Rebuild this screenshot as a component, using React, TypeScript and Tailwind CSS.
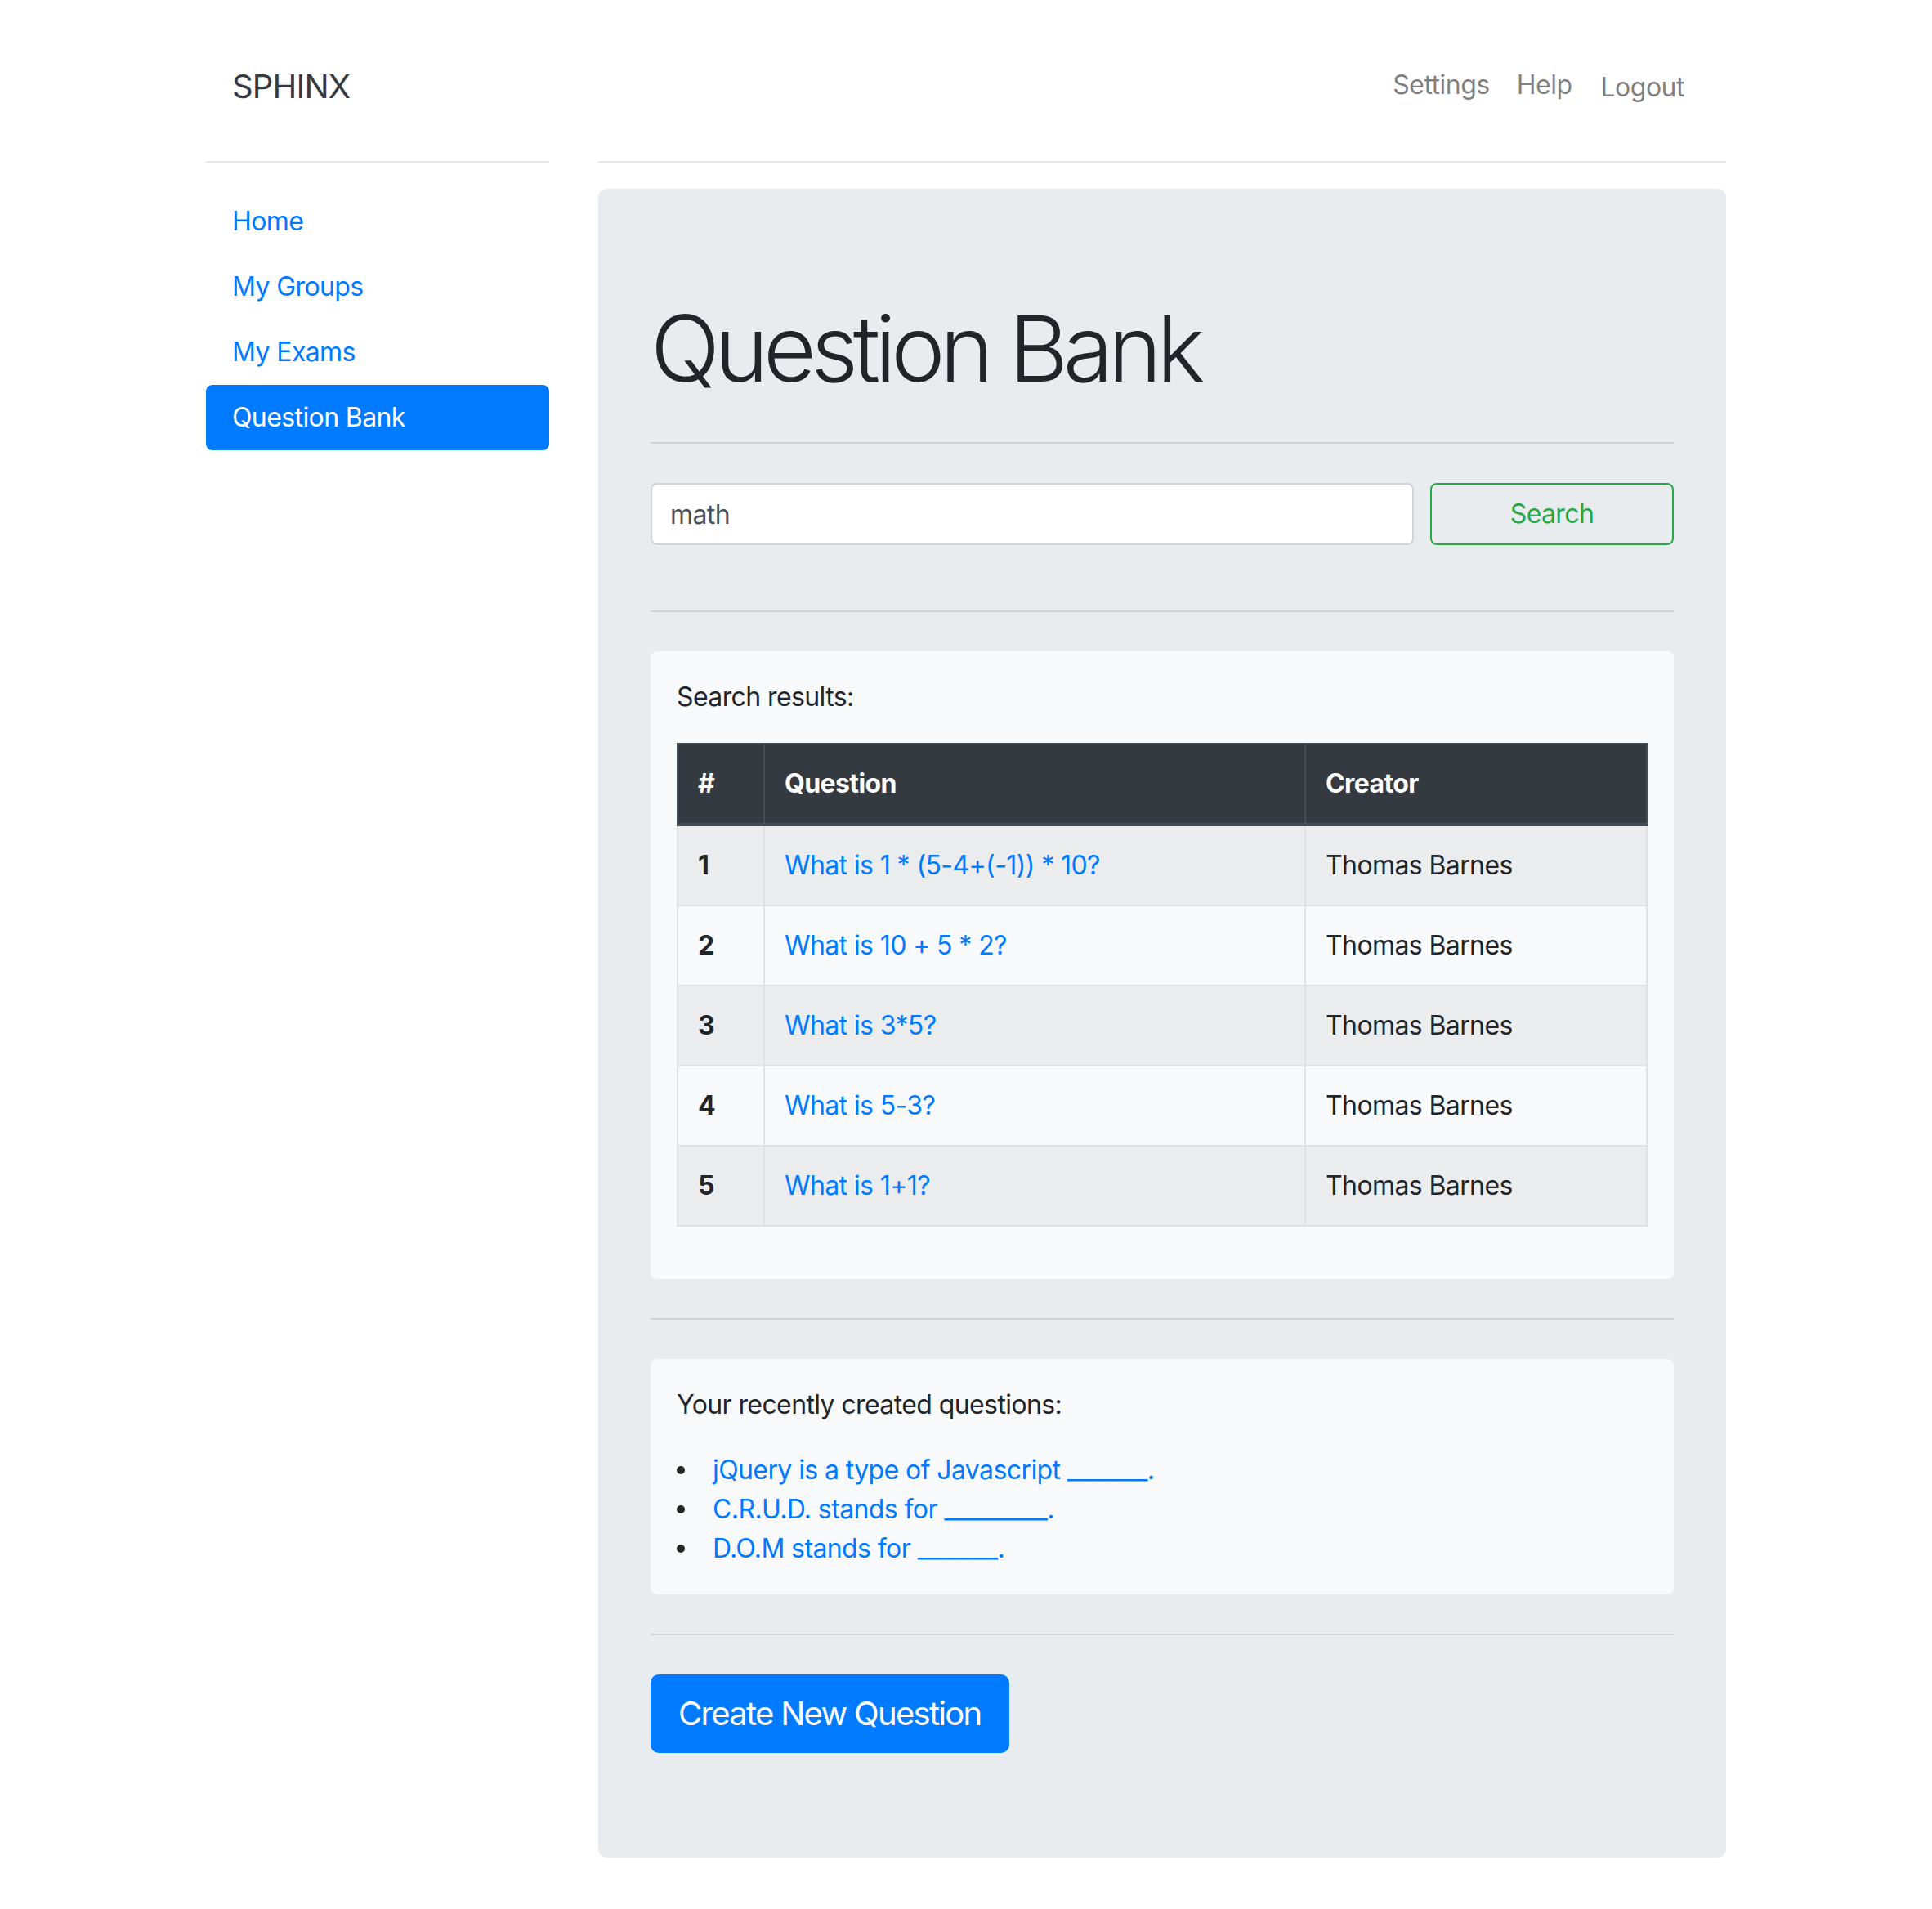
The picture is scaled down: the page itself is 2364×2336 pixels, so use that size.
import React from "react";

const rows = [
  { n: "1", q: "What is 1 * (5-4+(-1)) * 10?", c: "Thomas Barnes" },
  { n: "2", q: "What is 10 + 5 * 2?", c: "Thomas Barnes" },
  { n: "3", q: "What is 3*5?", c: "Thomas Barnes" },
  { n: "4", q: "What is 5-3?", c: "Thomas Barnes" },
  { n: "5", q: "What is 1+1?", c: "Thomas Barnes" },
];

const recent = [
  "jQuery is a type of Javascript _______.",
  "C.R.U.D. stands for _________.",
  "D.O.M stands for _______.",
];

export default function App() {
  return (
    <div className="min-h-screen bg-white text-[#212529] font-['Inter','Noto_Sans',sans-serif] text-[32px] leading-[48px] tracking-[-0.6px] [font-feature-settings:'calt'_0]">
      <div className="mx-auto w-[1860px] pb-[64px]">
        {/* Header */}
        <header className="flex gap-[60px]">
          <div className="w-[420px] h-[199px] border-b-2 border-black/10 pl-[32px] pt-[76px]">
            <span className="text-[40px] leading-[60px] tracking-[-0.8px] text-[#343a40]">SPHINX</span>
          </div>
          <div className="flex-1 h-[199px] border-b-2 border-black/10 flex justify-end items-start pr-[51px] pt-[80px] text-black/50 tracking-[-0.5px]">
            <a href="#" className="block">Settings</a>
            <a href="#" className="block ml-[33px]">Help</a>
            <a href="#" className="block ml-[35px] mt-[3px]">Logout</a>
          </div>
        </header>

        <div className="flex gap-[60px] mt-[32px]">
          {/* Sidebar */}
          <nav className="w-[420px] flex flex-col">
            <a href="#" className="block px-[32px] py-[16px] rounded-[8px] text-[#007bff]">Home</a>
            <a href="#" className="block px-[32px] py-[16px] rounded-[8px] text-[#007bff]">My Groups</a>
            <a href="#" className="block px-[32px] py-[16px] rounded-[8px] text-[#007bff]">My Exams</a>
            <a href="#" className="block px-[32px] py-[16px] rounded-[8px] bg-[#007bff] text-white">Question Bank</a>
          </nav>

          {/* Main */}
          <main className="w-[1380px] bg-[#e9ecef] rounded-[10px] px-[64px] py-[128px]">
            <h1 className="text-[112px] leading-[134px] font-light tracking-[-6.5px] text-[#212529]">Question Bank</h1>
            <hr className="my-[48px] border-0 border-t-2 border-black/10" />

            <form className="flex gap-[20px] pb-[32px]" onSubmit={(e) => e.preventDefault()}>
              <input
                type="text"
                defaultValue="math"
                className="w-[934px] h-[76px] bg-white border-2 border-[#ced4da] rounded-[8px] px-[22px] text-[32px] tracking-[-0.6px] text-[#495057] outline-none"
              />
              <button
                type="submit"
                className="flex-1 h-[76px] border-2 border-[#28a745] rounded-[8px] text-[#28a745] text-[32px] tracking-[-0.6px]"
              >
                Search
              </button>
            </form>

            <hr className="my-[48px] border-0 border-t-2 border-black/10" />

            <section className="bg-[#f8f9fa] rounded-[8px] p-[32px]">
              <p className="mb-[32px]">Search results:</p>
              <table className="w-full table-fixed border-collapse mb-[32px]">
                <colgroup>
                  <col className="w-[106px]" />
                  <col className="w-[662px]" />
                  <col />
                </colgroup>
                <thead>
                  <tr className="bg-[#343a40] text-white">
                    <th className="text-left font-bold px-[24px] py-[24px] border-2 border-b-4 border-[#454d55]">#</th>
                    <th className="text-left font-bold px-[24px] py-[24px] border-2 border-b-4 border-[#454d55]">Question</th>
                    <th className="text-left font-bold px-[24px] py-[24px] border-2 border-b-4 border-[#454d55]">Creator</th>
                  </tr>
                </thead>
                <tbody>
                  {rows.map((r, i) => (
                    <tr key={r.n} className={i % 2 === 0 ? "bg-black/5" : ""}>
                      <th className="text-left font-bold px-[24px] py-[24px] border-2 border-[#dee2e6]">{r.n}</th>
                      <td className="px-[24px] py-[24px] border-2 border-[#dee2e6]">
                        <a href="#" className="text-[#007bff]">{r.q}</a>
                      </td>
                      <td className="px-[24px] py-[24px] border-2 border-[#dee2e6]">{r.c}</td>
                    </tr>
                  ))}
                </tbody>
              </table>
            </section>

            <hr className="my-[48px] border-0 border-t-2 border-black/10" />

            <section className="bg-[#f8f9fa] rounded-[8px] p-[32px]">
              <p className="mb-[32px]">Your recently created questions:</p>
              <ul>
                {recent.map((t) => (
                  <li key={t} className="flex items-center">
                    <span className="w-[10px] h-[10px] rounded-full bg-[#212529] shrink-0" />
                    <a href="#" className="ml-[34px] text-[#007bff]">{t}</a>
                  </li>
                ))}
              </ul>
            </section>

            <hr className="my-[48px] border-0 border-t-2 border-black/10" />

            <button
              type="button"
              className="bg-[#007bff] border-2 border-[#007bff] text-white text-[40px] leading-[60px] tracking-[-1.7px] px-[32px] py-[16px] rounded-[10px]"
            >
              Create New Question
            </button>
          </main>
        </div>
      </div>
    </div>
  );
}
